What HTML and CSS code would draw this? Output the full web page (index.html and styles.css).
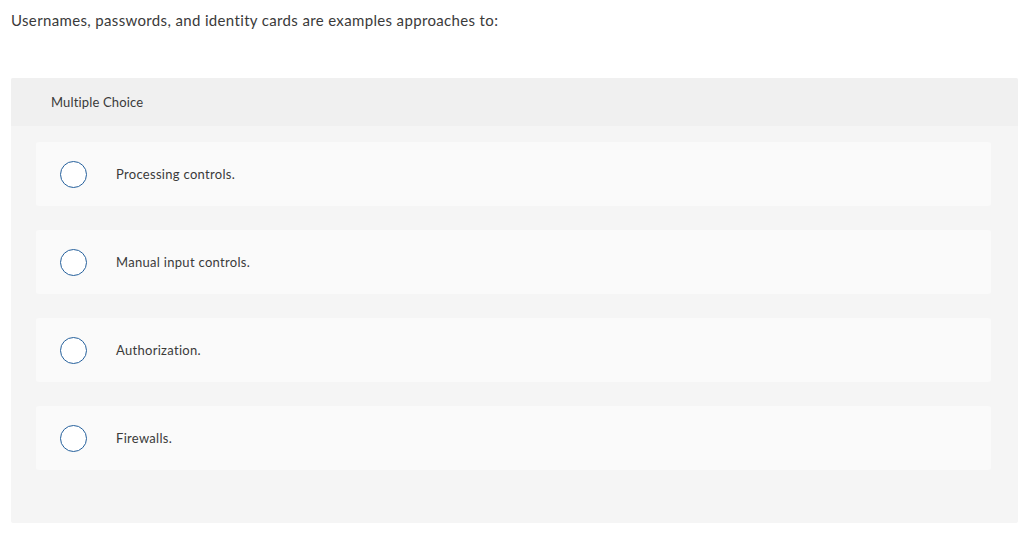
FILE: index.html
```html
<!DOCTYPE html>
<html>
<head>
<meta charset="utf-8">
<link rel="stylesheet" href="styles.css">
</head>
<body>
<div class="page">
  <p class="question">Usernames, passwords, and identity cards are examples approaches to:</p>
  <section class="panel">
    <header class="panel-head">Multiple Choice</header>
    <div class="options">
      <label class="option"><span class="radio"></span><span class="label">Processing controls.</span></label>
      <label class="option"><span class="radio"></span><span class="label">Manual input controls.</span></label>
      <label class="option"><span class="radio"></span><span class="label">Authorization.</span></label>
      <label class="option"><span class="radio"></span><span class="label">Firewalls.</span></label>
    </div>
  </section>
</div>
</body>
</html>
```

FILE: styles.css
```css
html, body {
  margin: 0;
  padding: 0;
  background: #ffffff;
}
body {
  font-family: "Lato", "Open Sans", "Liberation Sans", sans-serif;
  color: #333333;
}
.page {
  padding: 9px 6px 0 11px;
}
.question {
  margin: 0;
  font-size: 15px;
  line-height: 22px;
  letter-spacing: 0.35px;
  color: #3a3a3a;
}
.panel {
  margin-top: 47px;
  background: #f5f5f5;
  border-radius: 2px;
  height: 445px;
  box-sizing: border-box;
}
.panel-head {
  background: #f0f0f0;
  height: 48px;
  display: flex;
  align-items: center;
  padding-left: 40px;
  font-size: 13px;
  letter-spacing: 0.15px;
  color: #3a3a3a;
  border-radius: 2px 2px 0 0;
}
.options {
  display: flex;
  flex-direction: column;
  gap: 24px;
  padding: 16px 27px 0 25px;
}
.option {
  display: flex;
  align-items: center;
  height: 64px;
  background: #fafafa;
  border-radius: 3px;
  padding-left: 24px;
}
.radio {
  width: 25px;
  height: 25px;
  border: 1.4px solid #25609c;
  border-radius: 50%;
  background: #ffffff;
  flex: none;
}
.label {
  margin-left: 29px;
  font-size: 13px;
  letter-spacing: 0.3px;
  color: #3a3a3a;
}
```
